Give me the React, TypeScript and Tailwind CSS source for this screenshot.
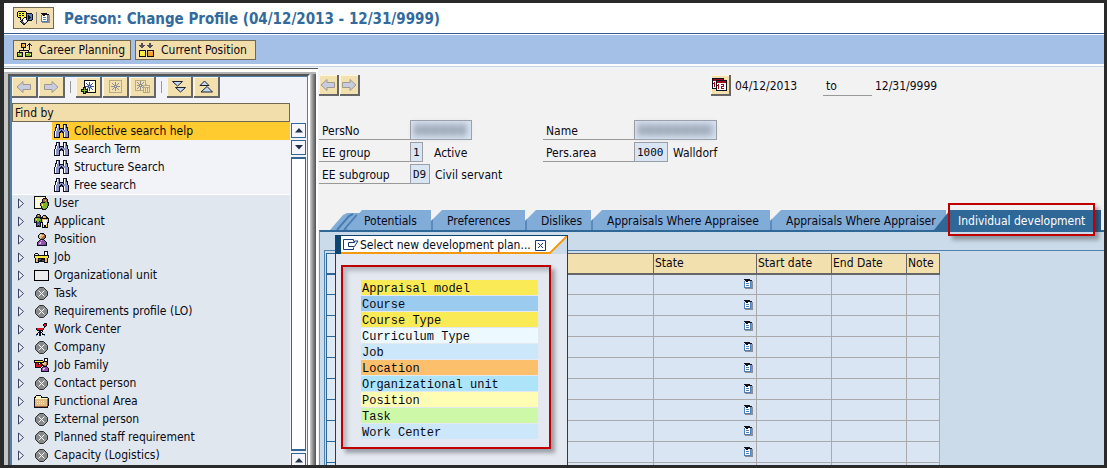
import React, {useState} from 'react';
import classNames from 'clsx';

// one letter per colour, a dot is see-through
const palette: Record<string, string> = {
    k: '#10101c', w: '#ffffff', b: '#8a92c8', n: '#44568c', g: '#7fb52e', d: '#4f8a1c', y: '#f8ec40',
    o: '#f0a030', t: '#e4bc84', s: '#a06838', p: '#9850b0', r: '#dc1020', m: '#a00818', a: '#8e8e96',
    l: '#d4d4dc', c: '#c8dcf4', f: '#c9b78b', x: '#fff8c0', u: '#4f7fb5', e: '#505058', q: '#b9aa86',
};

interface IPixels {
    rows: string[];
    className?: string;
}

const Pixels: React.FC<IPixels> = ({rows, className}) => (
    <svg width={rows[0].length} height={rows.length} viewBox={`0 0 ${rows[0].length} ${rows.length}`}
         shapeRendering="crispEdges" className={classNames('shrink-0', className)} aria-hidden="true">
        {rows.map((row, y) => row.split('').map((c, x) => palette[c] &&
            <rect key={`${x}-${y}`} x={x} y={y} width="1" height="1" fill={palette[c]}/>))}
    </svg>
);

const icons: Record<string, string[]> = {
    binoculars: [
        '..kkkk...kkkk..',
        '..kwbk...kwbk..',
        '..kwbk...kwbk..',
        '.kkwbk...kwbkk.',
        '.kwbbkkkkkwbbk.',
        '.kwbbkbbbkwbbk.',
        '.kwbbbbkbbbbbk.',
        'kwbbbbkkkbbbbbk',
        'kwbbbkkbkkwbbbk',
        'kwbbbk...kwbbbk',
        'kwbbbk...kwbbbk',
        'kwbbbk...kwbbbk',
        'kwbbbk...kwbbbk',
        'kkkkkk...kkkkkk',
    ],
    user: [
        'kkkkkkkkkkkk...',
        'kxxxxxxxxxxk...',
        'kxwxwxwxwkkkk..',
        'kxxxxxxxkssssk.',
        'kxwxwxwxksstsk.',
        'kxxxxxxxkssssk.',
        'kxwxwxwkkkksgkk',
        'kxxxxxkggggggdk',
        'kxwxwxkgyggggdk',
        'kxxxxxkgyggggdk',
        'kxwxwxwkgggggk.',
        'kxxxxxxkgggggk.',
        'kkkkkkkkkggdk..',
        '........kkkk...',
    ],
    applicant: [
        '...kkk.........',
        '..kstsk..kkk...',
        '..ksssk.kttsk..',
        '.kkkkkkkktttkk.',
        'kgggggkkkkkkkkk',
        'kgyggggkttttttk',
        'kgggggdktwwwwtk',
        'kgkggkdktwwwwtk',
        'kkknnnkkkwwwwkk',
        '..knnnk.kwwwwk.',
        '..knbnk.ktwwtk.',
        '..knknk.kykkyk.',
        '..kkkkk.kykkyk.',
        '........kkkkkk.',
    ],
    position: [
        '...kkkk...',
        '..kttssk..',
        '.ktxtttsk.',
        '.kttttssk.',
        '.ktttsssk.',
        '..ktsssk..',
        '...kkkk...',
        '..kptppk..',
        '.kppppppk.',
        'kpplpppppk',
        'kpllppppnk',
        'kppppppnnk',
        'kkkkkkkkkk',
    ],
    job: [
        '..........kkkk.',
        '..........kwwk.',
        '.kkk......kwwk.',
        'k...k.....kwwk.',
        'kkkkkkkkkkkkkkk',
        'kyyyyyyyyyyyyyk',
        'kyyyyyyyyyyyyyk',
        '.kttkkkkkkktok.',
        '.ktokeekkkktok.',
        '.ktokekkeekttk.',
        '.ktokkkkkkktok.',
        '.kkkk.....kkkk.',
    ],
    chair: [
        '........kkk',
        '.......krrk',
        '.......krrk',
        '........kk.',
        '........k..',
        'krrrrrrk...',
        'krrrrrrk...',
        '.kkkkkk....',
        '...kk.k....',
        '..kkkk.....',
        '.k.kk.k....',
        'kk.kk.kkk..',
        'u..kk...u..',
    ],
    jobFamily: [
        '..........kkkk.',
        '..........kwwk.',
        'kkkkkkkkk.kwwk.',
        'kyyyyyyyykkkkk.',
        'kkkkkkkkkkttsk.',
        '.krrkwkktxttsk.',
        '.krrkrrkktttsk.',
        '.krrrrrkkkssk..',
        '.krrrrrk.kkkk..',
        '.kkkkkk.kppppk.',
        '.......kpllpppk',
        '.......kplppppk',
        '.......kpppppnk',
        '.......kkkkkkkk',
    ],
    folder: [
        '..kkkkk........',
        '.kxxxxxk.......',
        'kkxxxxxkkkkkkk.',
        'kxxxxxxxxxxxxtk',
        'kttttttttttttsk',
        'kttttttttttttsk',
        'kttxtxtxtxtttsk',
        'kttttttttttttsk',
        'kttxtxtxtxtttsk',
        'kttttttttttttsk',
        'kttttttttttttsk',
        'kssssssssssssk.',
        'kkkkkkkkkkkkkk.',
    ],
    list: [
        'kkkkkk...',
        '.kkkkkkk.',
        'u.kkwwuaa',
        'uwwwwwuaa',
        'uwuuuwuaa',
        'uwwwwwuaa',
        'uwuuuwuaa',
        'uwwwwwuaa',
        'uuuuuuuaa',
        '.aaaaaaaa',
    ],
    session: [
        '.kkkkkkkk.......',
        'kyyyyyyyyk......',
        'kykkykkyykkkkkk.',
        'kyyyyyyyykuuuuuk',
        'kykkykkyykukuuuk',
        'kyyyyyyyykukkuuk',
        '.kkkyyykkkukkkuk',
        '...kyykwwkukkuuk',
        '...kykwwwkukuunk',
        '....kklwwwkkkkk.',
        '...keewwwlk.....',
        '....keewlk......',
        '.....keek.......',
        '......kk........',
    ],
    career: [
        '....kkkkk...k..',
        '....kotok..kkk.',
        '....kooxk.k.k.k',
        '....koook...k..',
        '....kkkkk...k..',
        '......k.....k..',
        '......k.....k..',
        '..kkkkkkkkkk...',
        '..k........k...',
        'kkkkkk..kkkkkkk',
        'kxgggk..kxxgggk',
        'kggxgk..kggggxk',
        'kggggk..kgggggk',
        'kkkkkk..kkkkkkk',
    ],
    current: [
        '..ee......ee...',
        '..ee......ee...',
        'eeeeee..eeeeee.',
        '.eeee....eeee..',
        '..ee......ee...',
        '...............',
        '...............',
        'kkkkkkk.kkkkkkk',
        'kyyyyxk.ktttxok',
        'kyxyyyk.kotoook',
        'kyyyyyk.koooook',
        'kyyyyyk.koooook',
        'kyyyyyk.koooook',
        'kkkkkkk.kkkkkkk',
    ],
    create: [
        '...kkkkkkkkkkkk',
        '...kwwwwwwwwwxk',
        '...kwwwwnwwwwxk',
        '...kwnwwnwwnwxk',
        '...kwwncncnwwxk',
        '...kwwcnnncwwxk',
        '...knnnncnnnnxk',
        '..kkkwcnnncwwxk',
        '..kgkwncncnwxxk',
        'kkkgkkkwnwwnxxk',
        'kgggggkwnwwxxxk',
        'kkkgkkkxxxxxxxk',
        '..kgkkkkkkkkkkk',
        '..kkk..........',
    ],
    change: [
        'qqqqqqqqqqqqq',
        'q...........q',
        'q.....a.....q',
        'q..a..a..a..q',
        'q...a.a.a...q',
        'q....aaa....q',
        'q.aaaa.aaaa.q',
        'q....aaa....q',
        'q...a.a.a...q',
        'q..a..a..a..q',
        'q.....a.....q',
        'q...........q',
        'qqqqqqqqqqqqq',
    ],
    remove: [
        'qqqqqqqqqqq....',
        'q....a....q....',
        'q.a..a..a.q....',
        'q..a.a.a..q....',
        'q...aaa...qq...',
        'q.aaa.aaqqqqqqq',
        'q...aaa.q.....q',
        'q..a.a.aqqqqqqq',
        'q.a..a..q.q.q.q',
        'q....a..q.q.q.q',
        'qqqqqqqqq.q.q.q',
        '........q.q.q.q',
        '........qqqqqqq',
    ],
    calendar: [
        'kkkkkkkkkkkk....',
        'kmmmmmmmmmmk....',
        'kmmmkkkkkkkkkkk.',
        'kwwwkmmmmmmmmmk.',
        'kwmwkmmmmmmmmmk.',
        'kmmwkwwwwwwwwwk.',
        'kwmwkwmwwmmmwwk.',
        'kwmwkmmwwwwmwwk.',
        'kwmwkwmwwmmmwwk.',
        'kwwwkwmwwmwwwwk.',
        'kkkkkwmwwmmmwwk.',
        '....kwwwwwwwwwk.',
        '....kkkkkkkkkkk.',
    ],
};

const CircleIcon: React.FC = () => (
    <svg width="13" height="13" viewBox="0 0 13 13" className="shrink-0" aria-hidden="true">
        <path d="M4.500.5h4l4 4v4l-4 4h-4l-4-4v-4z" fill="#888a8c" stroke="#303030"/>
        <path d="M3.500 3.500l6 6M9.500 3.500l-6 6" stroke="#fff"/>
    </svg>
);

const OrgIcon: React.FC = () => (
    <svg width="15" height="11" viewBox="0 0 15 11" className="shrink-0" aria-hidden="true">
        <rect x=".5" y=".5" width="14" height="10" fill="#ececec" stroke="#000"/>
    </svg>
);

const ArrowIcon: React.FC<{flip?: boolean}> = ({flip}) => (
    <svg width="16" height="14" viewBox="0 0 16 14" aria-hidden="true">
        <path d={flip ? 'M15 7L9 1.500v3H1.500v5H9v3z' : 'M1 7L7 1.500v3h7.500v5H7v3z'}
              fill="#c8cce0" stroke="#a09a8e"/>
    </svg>
);

const DoubleIcon: React.FC<{up?: boolean}> = ({up}) => (
    <svg width="16" height="14" viewBox="0 0 16 14" aria-hidden="true">
        {up
            ? <path d="M6.500 1L11 5.500H2zM9 6.500L14.500 12H3z" fill="#c4d8f4" stroke="#1c2030"/>
            : <path d="M1.500 1.500h10L6.500 6zM4.500 7.500h10L9.500 12z" fill="#c4d8f4" stroke="#1c2030"/>}
    </svg>
);

interface IToolButton {
    label: string;
    children: React.ReactNode;
    wide?: boolean;
}

const ToolButton: React.FC<IToolButton> = ({label, children, wide}) => (
    <button type="button" aria-label={label}
            className={classNames('flex h-[21px] shrink-0 items-center justify-center border-r-2 border-b-2 border-[#666] bg-[#f2e0ae] shadow-[inset_1px_1px_0_#fdf6dc]', wide ? 'w-[26px]' : 'w-5')}>
        {children}
    </button>
);

const Divider: React.FC = () => <span className="mx-[4px] h-3 w-px bg-[#999]"/>;

const searches = ['Collective search help', 'Search Term', 'Structure Search', 'Free search'];

const objects = [
    {name: 'User', icon: 'user'},
    {name: 'Applicant', icon: 'applicant'},
    {name: 'Position', icon: 'position'},
    {name: 'Job', icon: 'job'},
    {name: 'Organizational unit', icon: 'org'},
    {name: 'Task', icon: 'circle'},
    {name: 'Requirements profile (LO)', icon: 'circle'},
    {name: 'Work Center', icon: 'chair'},
    {name: 'Company', icon: 'circle'},
    {name: 'Job Family', icon: 'jobFamily'},
    {name: 'Contact person', icon: 'circle'},
    {name: 'Functional Area', icon: 'folder'},
    {name: 'External person', icon: 'circle'},
    {name: 'Planned staff requirement', icon: 'circle'},
    {name: 'Capacity (Logistics)', icon: 'circle'},
];

const tabs = [
    {name: 'Potentials', width: 'w-[86px]'},
    {name: 'Preferences', width: 'w-[94px]'},
    {name: 'Dislikes', width: 'w-[66px]'},
    {name: 'Appraisals Where Appraisee', width: 'w-[179px]'},
    {name: 'Appraisals Where Appraiser', width: 'w-[176px]'},
];

const plans = [
    {name: 'Appraisal model', color: 'bg-[#faeb56]'},
    {name: 'Course', color: 'bg-[#9bcbef]'},
    {name: 'Course Type', color: 'bg-[#faeb56]'},
    {name: 'Curriculum Type', color: 'bg-[#ecfaff]'},
    {name: 'Job', color: 'bg-[#cce6fa]'},
    {name: 'Location', color: 'bg-[#fcc06c]'},
    {name: 'Organizational unit', color: 'bg-[#aee4fa]'},
    {name: 'Position', color: 'bg-[#fffdb4]'},
    {name: 'Task', color: 'bg-[#cdf8a8]'},
    {name: 'Work Center', color: 'bg-[#cce6fa]'},
];

const TreeIcon: React.FC<{icon: string}> = ({icon}) => {
    if (icon === 'circle') return <CircleIcon/>;
    if (icon === 'org') return <OrgIcon/>;
    return <Pixels rows={icons[icon]}/>;
};

const ScrollButton: React.FC<{down?: boolean}> = ({down}) => (
    <button type="button" aria-label={down ? 'Scroll down' : 'Scroll up'}
            className="flex h-[15px] w-full shrink-0 items-center justify-center border border-[#336694] bg-[#f4f6fa]">
        <svg width="8" height="5" viewBox="0 0 8 5" aria-hidden="true">
            <path d={down ? 'M0 0h8L4 4.500z' : 'M0 4.500h8L4 0z'} fill="#23324c"/>
        </svg>
    </button>
);

const Sidebar: React.FC = () => {
    const [selected, setSelected] = useState(searches[0]);

    return (
        <aside className="mt-px flex w-[314px] shrink-0 border-t border-[#555] bg-white pt-[3px] pr-[2px]">
            <div className="flex min-w-0 flex-1 border-t-2 border-l-4 border-[#b4b4b4] border-l-[#c4c4c4]">
                <div className="flex min-w-0 flex-1 flex-col border-t-2 border-r-2 border-l-2 border-[#555] border-r-white bg-[#f2f3f8]">
                    <div className="flex min-h-0 flex-1 flex-col border-t border-r border-l-2 border-[#4f80a8]">
                        <div className="flex h-[22px] shrink-0 items-start gap-px">
                            <ToolButton label="Back" wide><ArrowIcon/></ToolButton>
                            <ToolButton label="Forward" wide><ArrowIcon flip/></ToolButton>
                            <div className="flex h-5 items-center"><Divider/></div>
                            <ToolButton label="Create" wide><Pixels rows={icons.create}/></ToolButton>
                            <ToolButton label="Change" wide><Pixels rows={icons.change}/></ToolButton>
                            <ToolButton label="Delete" wide><Pixels rows={icons.remove}/></ToolButton>
                            <div className="flex h-5 items-center"><Divider/></div>
                            <ToolButton label="Expand all" wide><DoubleIcon/></ToolButton>
                            <ToolButton label="Collapse all" wide><DoubleIcon up/></ToolButton>
                        </div>
                        <div className="mt-1 flex min-h-0 flex-1">
                            <div className="flex min-w-0 flex-1 flex-col bg-[#e0e7ef]">
                                <h2 className="h-[19px] shrink-0 border border-[#706850] bg-[#f2deaa] px-[2px] leading-[19px]">Find
                                    by</h2>
                                <ul className="bg-[#f2f3f8] shadow-[0_1px_0_#fff]">
                                    {searches.map(name => (
                                        <li key={name} className="pl-10">
                                            <button type="button" onClick={() => setSelected(name)}
                                                    className={classNames('flex h-[18px] w-full items-center gap-[5px] pl-[2px] text-left', {
                                                        'bg-[#ffcb2e]': selected === name
                                                    })}>
                                                <Pixels rows={icons.binoculars}/>
                                                {name}
                                            </button>
                                        </li>
                                    ))}
                                </ul>
                                <ul>
                                    {objects.map(item => (
                                        <li key={item.name}>
                                            <button type="button" className="flex h-[18px] w-full items-center pl-[6px] text-left">
                                                <svg width="7" height="11" viewBox="0 0 7 11" className="shrink-0" aria-hidden="true">
                                                    <path d="M.5 1v9L5.500 5.500z" fill="#eef0f6" stroke="#3a4468"/>
                                                </svg>
                                                <span className="ml-2 flex w-[17px] shrink-0 justify-center"><TreeIcon icon={item.icon}/></span>
                                                <span className="ml-1">{item.name}</span>
                                            </button>
                                        </li>
                                    ))}
                                </ul>
                            </div>
                            <div className="mr-px ml-px flex w-[15px] shrink-0 flex-col pt-5">
                                <ScrollButton/>
                                <div className="h-[2px] shrink-0"/>
                                <ScrollButton down/>
                                <div className="mt-[2px] mb-[2px] min-h-0 flex-1 border-x border-t-2 border-b-2 border-[#336694] bg-white"/>
                                <div className="h-3 shrink-0 overflow-hidden"><ScrollButton/></div>
                            </div>
                        </div>
                    </div>
                </div>
                <div className="w-[6px] shrink-0 bg-linear-to-r from-[#d0d0d0] to-[#505050]"/>
            </div>
        </aside>
    );
};

interface IField {
    id: string;
    label: string;
    value?: string;
    text?: string;
    width: string;
    textGap?: string;
}

const Field: React.FC<IField> = ({id, label, value, text, width, textGap = 'ml-[5px]'}) => (
    <div className="flex h-5 items-stretch">
        <label htmlFor={id} className="w-[91px] shrink-0 border-b border-[#999] pl-[3px] leading-[22px]">{label}</label>
        <span className={classNames('relative shrink-0', width)}>
            <input id={id} readOnly defaultValue={value}
                   className="h-full w-full border border-[#9a9ea6] bg-[#d9e5f3] pl-[2px] font-['DejaVu_Sans_Mono',monospace] text-[11px]"/>
            {!value && <span className="absolute inset-x-1 inset-y-1 bg-[repeating-linear-gradient(90deg,#97a1b0_0_6px,#bcc8d8_6px_9px)] blur-[3px]"/>}
        </span>
        {text && <span className={classNames('leading-[22px]', textGap)}>{text}</span>}
    </div>
);

const PlanDialog: React.FC<{onClose: () => void}> = ({onClose}) => (
    <div role="dialog" aria-label="Select new development plan"
         className="absolute top-[3px] bottom-0 left-[15px] w-[233px] border border-b-0 border-[#0d4470] bg-[#e4e8f0]">
        <div className="flex h-[18px] bg-[#ccdbe9]">
            <div className="relative flex h-[18px] flex-1 items-center border-l-[5px] border-[#0d4470]">
                <svg viewBox="0 0 226 18" preserveAspectRatio="none" className="absolute inset-0 h-full w-full" aria-hidden="true">
                    <path d="M0 0H226L209 17H0z" fill="#fff"/>
                    <path d="M0 17H209L226 0" fill="none" stroke="#f59a10" strokeWidth="2"/>
                </svg>
                <svg width="16" height="12" viewBox="0 0 16 12" className="relative ml-[2px] shrink-0" fill="none" stroke="#123c78" aria-hidden="true">
                    <path d="M10.500 2.500v-2h-10v10h10v-2"/>
                    <path d="M5.500 3.500h6v-1.500h3.500L11.500 7.500h-6z"/>
                </svg>
                <span className="relative ml-px flex-1 whitespace-nowrap">Select new development plan...</span>
                <button type="button" aria-label="Close" onClick={onClose} className="relative mr-[21px] shrink-0">
                    <svg width="11" height="11" viewBox="0 0 11 11" fill="none" stroke="#123c78" aria-hidden="true">
                        <path d="M.5.5h10v10H.5zM3 3l5 5M8 3L3 8"/>
                    </svg>
                </button>
            </div>
        </div>
        <div className="mt-[11px] mr-4 ml-[5px] border-2 border-[#c00000] pt-[13px] pr-[11px] pb-[7px] pl-[18px] shadow-[4px_4px_4px_#9aa0a8,inset_4px_4px_4px_#b4b8c0]">
            <ul className="font-['Liberation_Mono',monospace]">
                {plans.map(plan => (
                    <li key={plan.name} className="pb-px">
                        <button type="button" className={classNames('block h-[15px] w-full pl-px text-left leading-[18px]', plan.color)}>
                            {plan.name}
                        </button>
                    </li>
                ))}
            </ul>
        </div>
    </div>
);

const App: React.FC = () => {
    const [isOpen, setIsOpen] = useState(true);

    return (
        <div className="flex h-screen flex-col overflow-hidden border-[3px] border-l-4 border-[#2a2a2a] bg-white font-['DejaVu_Sans_Condensed','DejaVu_Sans',sans-serif] text-[12px] text-[#0a0a14]">
            <header className="flex h-[31px] shrink-0 items-center border-b border-[#305a90] pl-[9px]">
                <button type="button" aria-label="Services" className="flex h-[22px] w-[41px] items-center justify-center border border-[#706850] bg-[#f2e0b2]">
                    <Pixels rows={icons.session}/>
                    <span className="mr-[4px] ml-[3px] h-3 w-px bg-[#888]"/>
                    <Pixels rows={icons.list}/>
                </button>
                <h1 className="ml-[10px] pt-[2px] text-[15px] font-bold text-[#336a9c]">Person: Change Profile (04/12/2013 - 12/31/9999)</h1>
            </header>
            <nav className="mt-px flex h-[29px] shrink-0 items-center gap-1 bg-[#a4c0e6] pl-[9px]">
                <button type="button" className="flex h-5 w-[118px] items-center gap-[7px] border border-[#706850] bg-[#f2deaa] pl-[3px] whitespace-nowrap">
                    <Pixels rows={icons.career}/>
                    Career Planning
                </button>
                <button type="button" className="flex h-5 w-[121px] items-center gap-[7px] border border-[#706850] bg-[#f2deaa] pl-[3px] whitespace-nowrap">
                    <Pixels rows={icons.current}/>
                    Current Position
                </button>
            </nav>
            <div className="mt-px h-[2px] shrink-0 border-b border-[#c4d4e8] bg-white"/>
            <div className="flex min-h-0 flex-1 bg-[#f2f2f2]">
                <Sidebar/>
                <main className="ml-px flex min-w-0 flex-1 flex-col pt-2">
                    <div className="flex h-[21px] shrink-0 items-start">
                        <ToolButton label="Previous"><ArrowIcon/></ToolButton>
                        <span className="w-px"/>
                        <ToolButton label="Next"><ArrowIcon flip/></ToolButton>
                        <span className="w-[351px]"/>
                        <ToolButton label="Choose period"><Pixels rows={icons.calendar}/></ToolButton>
                        <span className="ml-1 w-[88px] leading-[23px]">04/12/2013</span>
                        <span className="h-[21px] w-[49px] border-b border-[#999] pl-[3px] leading-[23px]">to</span>
                        <span className="ml-[3px] leading-[23px]">12/31/9999</span>
                    </div>
                    <div className="mt-6 flex shrink-0">
                        <div className="flex w-[224px] flex-col gap-[2px]">
                            <Field id="persNo" label="PersNo" width="w-[62px]"/>
                            <Field id="eeGroup" label="EE group" value="1" text="Active" width="w-[13px]" textGap="ml-[11px]"/>
                            <Field id="eeSubgroup" label="EE subgroup" value="D9" text="Civil servant" width="w-5"/>
                        </div>
                        <div className="flex flex-col gap-[2px]">
                            <Field id="name" label="Name" width="w-[83px]"/>
                            <Field id="persArea" label="Pers.area" value="1000" text="Walldorf" width="w-[34px]"/>
                        </div>
                    </div>
                    <div role="tablist" className="mt-[26px] flex h-5 shrink-0 items-end pl-[11px] whitespace-nowrap">
                        <svg width="31" height="17" viewBox="0 0 31 17" className="-mr-4 shrink-0" aria-hidden="true">
                            <path d="M0 17L13 2L17 0H31V17z" fill="#82acd8"/>
                            <path d="M7 17L19 3L23 1M14 17L27 2" fill="none" stroke="#4a7cb0" strokeWidth="2"/>
                        </svg>
                        {tabs.map((tab, index) => (
                            <button key={tab.name} type="button" role="tab" aria-selected={false}
                                    className={classNames('h-5 shrink-0 bg-[#82acd8] text-left leading-[22px] shadow-[inset_2px_0_0_#5a8abb]', tab.width, index === 0
                                        ? 'pl-[19px] [clip-path:polygon(0_100%,17px_0,100%_0,100%_100%)]'
                                        : 'pl-4 [clip-path:polygon(0_100%,0_11px,11px_0,100%_0,100%_100%)]')}>
                                {tab.name}
                            </button>
                        ))}
                        <div className="relative -ml-3">
                            <button type="button" role="tab" aria-selected={true}
                                    className="h-5 w-[167px] bg-[#2f6797] pl-6 text-left leading-[22px] text-white [clip-path:polygon(0_100%,16px_0,100%_0,100%_100%)]">
                                Individual development
                            </button>
                            <span className="pointer-events-none absolute -top-[7px] left-[14px] z-10 h-[33px] w-[147px] border-2 border-[#c00000] shadow-[4px_4px_4px_#00000050]"/>
                        </div>
                    </div>
                    <section className="relative flex min-h-0 flex-1 flex-col border-t-2 border-l border-[#2f6797] border-l-[#6f98c0] bg-[#ccdbe9] pt-[18px] pl-1">
                        <div className="min-h-0 flex-1 overflow-hidden border-t border-l border-[#4f82b0] pt-[2px] pl-px">
                            <table className="w-[614px] table-fixed border-collapse text-left">
                                <colgroup>
                                    <col className="w-5"/>
                                    <col/>
                                    <col className="w-[103px]"/>
                                    <col className="w-[75px]"/>
                                    <col className="w-[75px]"/>
                                    <col className="w-[33px]"/>
                                </colgroup>
                                <thead>
                                <tr className="h-5 bg-[#f2e0ae]">
                                    {['', '', 'State', 'Start date', 'End Date', 'Note'].map((name, index) => (
                                        <th key={index} className={classNames('border border-b-2 p-0 pl-px font-normal whitespace-nowrap', index === 0 ? 'border-[#2f6797] bg-[#e0e8f2]' : 'border-[#666]')}>{name}</th>
                                    ))}
                                </tr>
                                </thead>
                                <tbody>
                                {Array.from({length: 10}, (_, row) => (
                                    <tr key={row} className="h-[21px] bg-[#d9e5f3]">
                                        <td className="border border-[#2f6797] bg-[#e0e8f2] p-0"/>
                                        <td className="border border-[#aaa] p-0"/>
                                        <td className="border border-[#aaa] p-0 pr-[3px]">
                                            <Pixels rows={icons.list} className="ml-auto"/>
                                        </td>
                                        <td className="border border-[#aaa] p-0"/>
                                        <td className="border border-[#aaa] p-0"/>
                                        <td className="border border-[#aaa] p-0"/>
                                    </tr>
                                ))}
                                </tbody>
                            </table>
                        </div>
                        {isOpen && <PlanDialog onClose={() => setIsOpen(false)}/>}
                    </section>
                </main>
            </div>
        </div>
    );
};

export default App;
